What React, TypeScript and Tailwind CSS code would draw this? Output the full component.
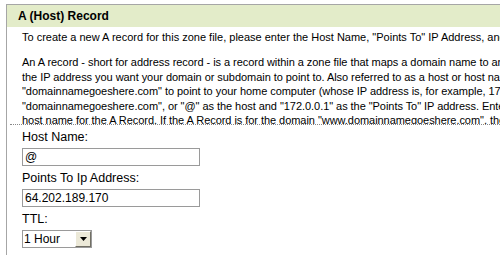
import React from 'react';

export default function App() {
  const lines = [
    'An A record - short for address record - is a record within a zone file that maps a domain name to an IP address. Enter the host name and the address below.',
    'the IP address you want your domain or subdomain to point to. Also referred to as a host or host name, for example, if you want the domain',
    '"domainnamegoeshere.com" to point to your home computer (whose IP address is, for example, 172.0.0.1), you would enter',
    '"domainnamegoeshere.com", or "@" as the host and "172.0.0.1" as the "Points To" IP address. Enter "@" as the',
    'host name for the A Record. If the A Record is for the domain "www.domainnamegoeshere.com", then enter "www".',
  ];

  return (
    <div className="w-[500px] h-[255px] overflow-hidden bg-white text-black font-['Liberation_Sans',Arial,sans-serif]">
      <div className="ml-[6px] mt-[4px] w-[600px] h-[251px] border-t border-l border-[#a6a6a6]">
        {/* header */}
        <div className="h-[22px] bg-[#e3ecc9] pl-[11px] text-[12px] font-bold leading-[22px]">A (Host) Record</div>

        <div className="pt-[3px]">
          <p className="pl-[15px] text-[11px] leading-[14.5px] whitespace-nowrap">
            To create a new A record for this zone file, please enter the Host Name, "Points To" IP Address, and TTL.
          </p>

          {/* clipped description */}
          <div className="mt-[10.5px] ml-[3px] pl-[12px] h-[70px] overflow-hidden border-b border-dotted border-[#888]">
            {lines.map((line, i) => (
              <div key={i} className="text-[11px] leading-[14.5px] whitespace-nowrap tracking-[-0.05px]">
                {line}
              </div>
            ))}
          </div>

          {/* form */}
          <div className="pl-[15px]">
            <div className="mt-[4px] text-[12.5px] leading-[16px]">Host Name:</div>
            <div className="mt-[3px] w-[178px] h-[18px] border border-[#9a9a9a] pl-[2px] text-[12px] leading-[16px]">@</div>

            <div className="mt-[4px] text-[12.5px] leading-[16px]">Points To Ip Address:</div>
            <div className="mt-[3px] w-[178px] h-[18px] border border-[#9a9a9a] pl-[2px] text-[12px] leading-[16px]">64.202.189.170</div>

            <div className="mt-[4px] text-[12.5px] leading-[16px]">TTL:</div>
            <div className="mt-[3px] w-[70px] h-[18px] border border-[#9a9a9a] flex">
              <div className="flex-1 pl-[1px] text-[12px] leading-[16px]">1 Hour</div>
              <div className="w-[16px] h-[16px] bg-[#ece9d8] border-t border-l border-white border-r border-b border-r-[#716f64] border-b-[#716f64] flex items-center justify-center">
                <svg width="7" height="4" viewBox="0 0 7 4">
                  <path d="M0 0H7L3.5 4Z" fill="#000" />
                </svg>
              </div>
            </div>
          </div>
        </div>
      </div>
    </div>
  );
}
